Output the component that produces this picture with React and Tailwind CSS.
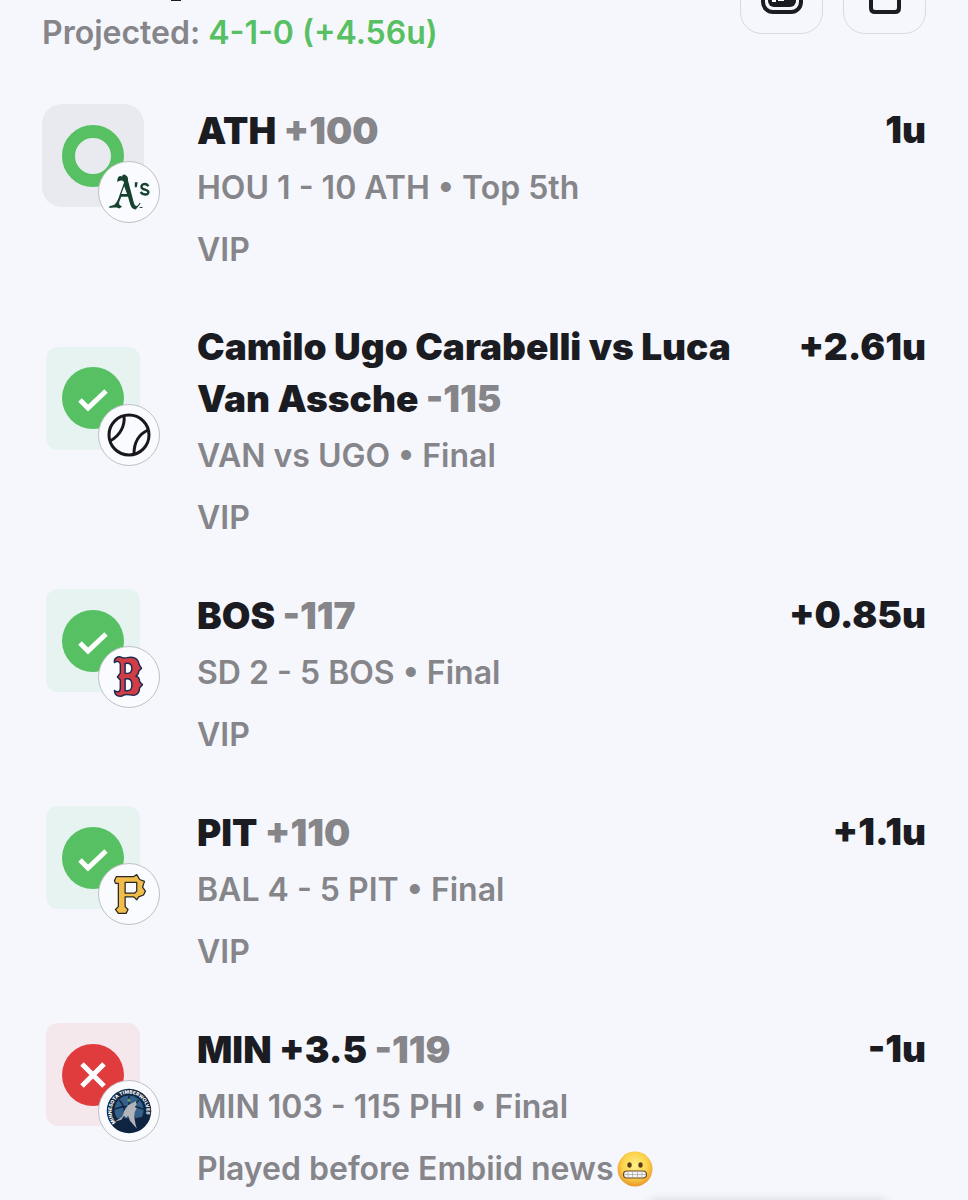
import React from 'react';

const AthleticsLogo = () => (
    <svg viewBox="0 0 62 62" className="w-full h-full" aria-hidden="true">
        <g fill="#17412f">
            <path
                fillRule="evenodd"
                d="M19 18c1-4 3-4 5-3 0-2 2-3 4-1 2 1 2 3 2 5l6 23c1 3 2 4 4 3l2-3 1 1-5 6c-4 0-5-3-6-6l-2-7h-7l-2 5c-1 3 1 4 3 5l-3 2c-3-2-6 0-11-1 2-3 5-1 7-4 2-2 3-5 4-8l5-14c-2-3-5-2-7 0zM26 25l-3 8h6z"
            />
            <path d="M37 21h3l-1 5h-2z" />
        </g>
        <path d="M51 25c-2-4-8-2-7 1 0 3 7 2 7 5 0 4-6 3-8 0" fill="none" stroke="#17412f" strokeWidth="2.5" />
        <path d="M42 47h3" stroke="#17412f" />
    </svg>
);

const TennisBall = () => (
    <svg viewBox="0 0 60 60" className="w-full h-full" fill="none" stroke="#17171d" strokeWidth="3" aria-hidden="true">
        <circle cx="30" cy="30" r="20" />
        <path d="M25 11c1 9-3 19-14 25" />
        <path d="M49 25c-11 5-14 15-14 24" />
    </svg>
);

const RedSoxLogo = () => (
    <svg viewBox="0 0 62 62" className="w-full h-full" aria-hidden="true">
        <path
            fillRule="evenodd"
            d="M16 16c-1-5 4-7 8-5 2 1 3 0 5 0 5-1 9 0 11 3 1 2 1 3 2 5l2 3-3 3c0 2-1 4-3 5 3 1 4 4 4 6l3 3-3 3c0 4-2 8-6 8-3 0-5-1-8-1-2 0-3 2-6 2-4 0-6-2-6-6 2 2 6 2 6-2V34l-3-3 3-4V18c0-3-4-4-6-2zM27 17v10c5 1 7-1 7-5 0-4-2-6-7-5zM27 33v12c5 1 7-1 7-6s-2-7-7-6z"
            fill="#d13d45"
            stroke="#1c2950"
            strokeWidth="1.5"
            strokeLinejoin="round"
        />
    </svg>
);

const PiratesLogo = () => (
    <svg viewBox="0 0 62 62" className="w-full h-full" aria-hidden="true">
        <path
            fillRule="evenodd"
            d="M18 13h18l3-2 3 5 5 2-2 6 3 4-2 4-5 2-2 3-3-3h-9v10l3 3-2 4h-8l-3-4 3-3V20h-3l-1-3zM27 19v11h10l2-2v-9z"
            fill="#f0bd4b"
            stroke="#2a2826"
            strokeWidth="1.3"
            strokeLinejoin="round"
        />
    </svg>
);

const WolvesLogo = () => (
    <svg viewBox="0 0 62 62" className="w-full h-full" aria-hidden="true">
        <circle cx="31" cy="31" r="23" fill="#0e2440" />
        <circle cx="31" cy="30" r="15" fill="#356089" />
        <path d="M16 29c9-4 21-4 30 0M31 15v24M21 20c6 6 7 14 3 21M41 20c-6 6-7 14-3 21" fill="none" stroke="#0e2440" strokeWidth="1.5" />
        <path d="M12 38c12 1 30 1 38-2-2 9-9 16-19 16s-17-6-19-14z" fill="#0e2440" />
        <path d="M16 42l8-5 2-6 4-6 4-2 4-2 1 3-2 3 2 1-2 4c-1 5 0 10 2 17l-7-8-2-5-2 2-2-2-3 4z" fill="#b1b4ba" />
        <path d="M29 20l2-2 2 2-2 2z" fill="#5f9d72" />
        <path id="wolves-arc" d="M17.500 43a18 18 0 1 1 27 0" fill="none" />
        <text fill="#fff" fontSize="5" fontWeight="800">
            <textPath href="#wolves-arc">MINNESOTA TIMBERWOLVES</textPath>
        </text>
    </svg>
);

const Grimace = () => (
    <svg viewBox="0 0 36 36" className="w-9 h-9 shrink-0" role="img" aria-label="grimacing face">
        <defs>
            <radialGradient id="face" cx="50%" cy="40%" r="60%">
                <stop offset="0" stopColor="#fff08a" />
                <stop offset="0.6" stopColor="#fbd34b" />
                <stop offset="1" stopColor="#e8962b" />
            </radialGradient>
        </defs>
        <circle cx="18" cy="18" r="17.5" fill="url(#face)" />
        <ellipse cx="12.5" cy="14" rx="2.2" ry="2.8" fill="#5b3b16" />
        <ellipse cx="23.5" cy="14" rx="2.2" ry="2.8" fill="#5b3b16" />
        <rect x="6.5" y="20" width="23" height="7" rx="3.5" fill="#f5f5f5" stroke="#6b4a24" strokeWidth="1.2" />
        <path d="M7 23.500h22M11 20.500v6M15.500 20.500v6M20.500 20.500v6M25 20.500v6" stroke="#a5a5a5" strokeWidth="0.7" />
    </svg>
);

const STATUS = {
    live: {
        tile: 'w-[102px] bg-[#e9eaef] rounded-[20px]',
        icon: <circle cx="31" cy="31" r="24.5" fill="none" stroke="#57c063" strokeWidth="13" />,
    },
    won: {
        tile: 'w-[94px] bg-[#e6f3f1] rounded-xl',
        icon: (
            <>
                <circle cx="31" cy="31" r="31" fill="#57c063" />
                <path d="M18 33l8 8L44 24" fill="none" stroke="#fff" strokeWidth="5" />
            </>
        ),
    },
    lost: {
        tile: 'w-[94px] bg-[#f4e8ed] rounded-xl',
        icon: (
            <>
                <circle cx="31" cy="31" r="31" fill="#e03c3e" />
                <path d="M20 20l22 22M42 20l-22 22" fill="none" stroke="#fff" strokeWidth="5" />
            </>
        ),
    },
};

const bets = [
    { id: 1, status: 'live', Logo: AthleticsLogo, pick: 'ATH', odds: '+100', score: 'HOU 1 - 10 ATH • Top 5th', units: '1u', note: 'VIP' },
    { id: 2, status: 'won', Logo: TennisBall, pick: 'Camilo Ugo Carabelli vs Luca Van Assche', odds: '-115', score: 'VAN vs UGO • Final', units: '+2.61u', note: 'VIP' },
    { id: 3, status: 'won', Logo: RedSoxLogo, pick: 'BOS', odds: '-117', score: 'SD 2 - 5 BOS • Final', units: '+0.85u', note: 'VIP' },
    { id: 4, status: 'won', Logo: PiratesLogo, pick: 'PIT', odds: '+110', score: 'BAL 4 - 5 PIT • Final', units: '+1.1u', note: 'VIP' },
    { id: 5, status: 'lost', Logo: WolvesLogo, pick: 'MIN +3.5', odds: '-119', score: 'MIN 103 - 115 PHI • Final', units: '-1u', note: 'Played before Embiid news', emoji: true },
];

const StatusTile = ({ status, Logo }) => {
    const { tile, icon } = STATUS[status];
    return (
        <div className="relative mb-1 w-[102px] h-[103px] shrink-0 flex justify-center">
            <div className={`h-full flex items-center justify-center ${tile}`}>
                <svg viewBox="0 0 62 62" className="w-[62px] h-[62px]" role="img" aria-label={status}>
                    {icon}
                </svg>
            </div>
            <div className="absolute -right-4 -bottom-4 w-[62px] h-[62px] rounded-full bg-[#fafbfe] border border-[#bfc0c6]">
                <Logo />
            </div>
        </div>
    );
};

const BetRow = ({ bet }) => (
    <li>
        <div className="flex items-center">
            <StatusTile status={bet.status} Logo={bet.Logo} />
            <div className="flex-1 min-w-0 ml-[53px]">
                <h2 className="text-[37px] leading-[52px] font-black">
                    {bet.pick} <span className="text-[#85858a]">{bet.odds}</span>
                </h2>
                <p className="mt-2 text-[32px] leading-[46px] font-semibold text-[#85858a]">{bet.score}</p>
            </div>
            <span className="self-start ml-8 text-[37px] leading-[52px] font-black">{bet.units}</span>
        </div>
        <p className="mt-4 ml-[155px] flex items-center gap-1 text-[32px] leading-[46px] font-semibold text-[#85858a]">
            {bet.note}
            {bet.emoji && <Grimace />}
        </p>
    </li>
);

const iconButton = 'w-[83px] h-[83px] rounded-[22px] border border-[#d9dade] flex items-center justify-center';

const App = () => {
    return (
        <main className="h-screen overflow-hidden relative bg-[#f6f7fc] px-[42px] text-[#1b1b22] font-['Inter',sans-serif]">
            {/* Header, scrolled partly out of view */}
            <header className="-mt-[49px] h-[105px] flex items-start justify-between">
                <p className="self-end text-[32px] leading-[46px] font-semibold text-[#85858a]">
                    Projected: <span className="text-[#57c063]">4-1-0 (+4.56u)</span>
                </p>
                <div className="flex gap-5">
                    <button type="button" aria-label="Share image" className={iconButton}>
                        <svg viewBox="0 0 42 42" className="w-[42px] h-[42px]" aria-hidden="true">
                            <rect x="2" y="2" width="38" height="38" rx="10" fill="none" stroke="#1b1b22" strokeWidth="4" />
                            <rect x="7" y="7" width="28" height="28" rx="6" fill="#1b1b22" />
                            <path d="M11 29h4M17 28h6" stroke="#fff" strokeWidth="2" />
                        </svg>
                    </button>
                    <button type="button" aria-label="Share" className={iconButton}>
                        <svg viewBox="0 0 42 42" className="w-[42px] h-[42px]" fill="none" stroke="#1b1b22" strokeWidth="4" aria-hidden="true">
                            <path d="M14 16H7v20q0 4 4 4h20q4 0 4-4V16h-7M21 24V3M13 10l8-8 8 8" />
                        </svg>
                    </button>
                </div>
            </header>
            {/* Descender of the title above the fold */}
            <span aria-hidden="true" className="absolute top-0 left-[171px] w-[10px] h-px bg-[#1b1b22]" />

            <ul className="mt-12 flex flex-col gap-[48px]">
                {bets.map((bet) => (
                    <BetRow key={bet.id} bet={bet} />
                ))}
            </ul>

            <div className="absolute -bottom-2 left-[650px] right-[82px] h-2 rounded-full shadow-[0_0_10px_rgba(0,0,0,0.15)]" />
        </main>
    );
};

export default App;
